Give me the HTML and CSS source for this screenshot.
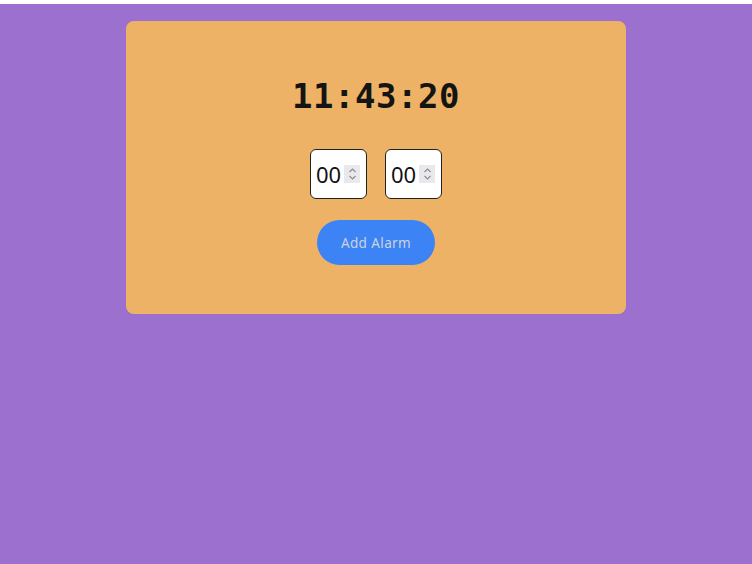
FILE: index.html
```html
<!DOCTYPE html>
<html>
<head>
<meta charset="utf-8">
<title>Alarm Clock</title>
<link rel="stylesheet" href="styles.css">
</head>
<body>
<div class="page">
  <div class="card">
    <div class="clock">11:43:20</div>
    <div class="inputs">
      <div class="num">
        <span class="val">00</span>
        <span class="spin"><svg width="9" height="14" viewBox="0 0 9 14"><path d="M1.5 5 L4.5 2 L7.5 5 M1.5 9 L4.5 12 L7.5 9" fill="none" stroke="#8a8a90" stroke-width="1.1"/></svg></span>
      </div>
      <div class="num">
        <span class="val">00</span>
        <span class="spin"><svg width="9" height="14" viewBox="0 0 9 14"><path d="M1.5 5 L4.5 2 L7.5 5 M1.5 9 L4.5 12 L7.5 9" fill="none" stroke="#8a8a90" stroke-width="1.1"/></svg></span>
      </div>
    </div>
    <button class="add">Add Alarm</button>
  </div>
</div>
</body>
</html>
```
FILE: styles.css
```css
html, body {
  margin: 0;
  padding: 0;
  background: #ffffff;
}
.page {
  margin-top: 4px;
  height: 560px;
  background: #9b70cf;
  padding-top: 17px;
  box-sizing: border-box;
}
.card {
  width: 500px;
  height: 293px;
  margin: 0 auto;
  background: #eeb266;
  border-radius: 8px;
  box-sizing: border-box;
  padding-top: 54px;
  display: flex;
  flex-direction: column;
  align-items: center;
}
.clock {
  font-family: "DejaVu Sans Mono", "Liberation Mono", monospace;
  font-size: 34px;
  font-weight: bold;
  line-height: 42px;
  color: #141414;
  letter-spacing: 0.5px;
}
.inputs {
  margin-top: 32px;
  display: flex;
  gap: 18px;
}
.num {
  width: 57px;
  height: 50px;
  box-sizing: border-box;
  border: 1px solid #222;
  border-radius: 6px;
  background: #fff;
  display: flex;
  align-items: center;
  padding-left: 5px;
  gap: 3px;
}
.val {
  font-family: "Noto Sans", "Open Sans", sans-serif;
  font-size: 22px;
  color: #111;
  line-height: 1;
}
.spin {
  width: 16px;
  height: 18px;
  background: #e9e9ed;
  display: flex;
  align-items: center;
  justify-content: center;
}
.add {
  margin-top: 21px;
  width: 118px;
  height: 45px;
  border: none;
  border-radius: 23px;
  background: #3c84f6;
  color: #cdd3dd;
  font-family: "Noto Sans", "Open Sans", sans-serif;
  font-size: 13.5px;
  letter-spacing: 0.4px;
  padding: 0;
}
```
